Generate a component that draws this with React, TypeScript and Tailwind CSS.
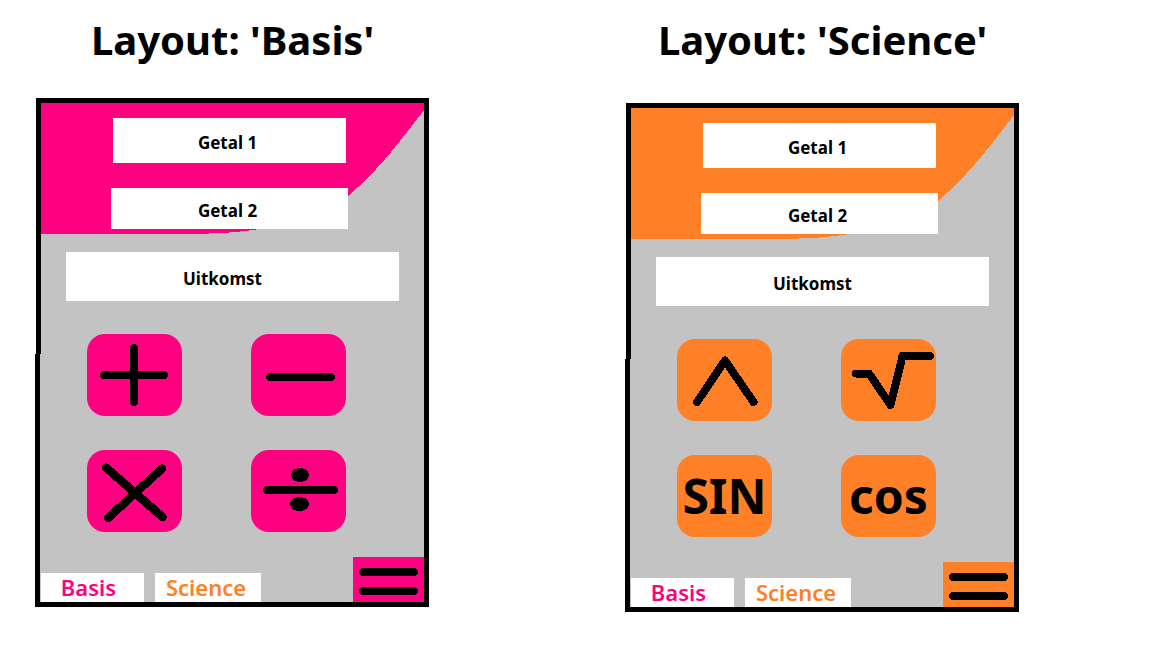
import React from 'react';

type Theme = 'basis' | 'science';

const fills: Record<Theme, string> = {
  basis: 'bg-[#ff0080]',
  science: 'bg-[#ff8027]',
};

const curves: Record<Theme, string> = {
  basis: 'fill-[#ff0080]',
  science: 'fill-[#ff8027]',
};

interface Operation {
  label: string;
  content: React.ReactNode;
}

function Strokes({ children }: { children: React.ReactNode }) {
  return (
    <svg
      viewBox="0 0 95 82"
      className="h-full w-full fill-none stroke-black stroke-[8]"
      strokeLinecap="round"
      strokeLinejoin="round"
      shapeRendering="crispEdges"
      aria-hidden="true"
    >
      {children}
    </svg>
  );
}

const operations: Record<Theme, Operation[]> = {
  basis: [
    { label: 'Plus', content: <Strokes><path d="M17 41H77M47 14V68" /></Strokes> },
    { label: 'Min', content: <Strokes><path d="M19 43H80" /></Strokes> },
    { label: 'Keer', content: <Strokes><path d="M19 17.5L75.5 67M75 18.5L21 68" strokeWidth="8.5" /></Strokes> },
    {
      label: 'Delen',
      content: (
        <Strokes>
          <path d="M16 40H83" />
          <ellipse cx="49" cy="25" rx="5" ry="3" />
          <ellipse cx="48.5" cy="54" rx="5.5" ry="3" />
        </Strokes>
      ),
    },
  ],
  science: [
    { label: 'Macht', content: <Strokes><path d="M20 63L48 21.5L76.5 63" /></Strokes> },
    { label: 'Wortel', content: <Strokes><path d="M15 34.5H28L49.5 66L61.5 17H89" /></Strokes> },
    { label: 'Sinus', content: 'SIN' },
    { label: 'Cosinus', content: 'cos' },
  ],
};

const fieldText =
  'bg-white text-center text-[17px] font-bold text-black outline-none placeholder:text-black placeholder:opacity-100';

function Calculator({ theme }: { theme: Theme }) {
  return (
    <div className="relative border-[5px] border-black bg-[#c3c3c3]">
      <svg
        viewBox="0 0 383 131"
        preserveAspectRatio="none"
        shapeRendering="crispEdges"
        className={`absolute left-0 top-0 h-[131px] w-full ${curves[theme]}`}
        aria-hidden="true"
      >
        <path d="M0 0H383V7C362 34 340 65 307 93C280 114 250 121 212 127C190 130 170 131 130 131H0Z" />
      </svg>
      <span className="absolute -left-[6px] -bottom-[5px] top-[251px] w-px bg-black" />
      <span className="absolute -left-px bottom-0 top-[251px] w-px bg-[#c3c3c3]" />

      <div className="relative flex flex-col">
        <div className="flex flex-col items-center gap-[25px] pr-[6px] pt-[15px]">
          <input aria-label="Getal 1" placeholder="Getal 1" className={`h-[45px] w-[233px] pr-1 pt-1 ${fieldText}`} />
          <input aria-label="Getal 2" placeholder="Getal 2" className={`h-[41px] w-[237px] pr-1 pt-1 ${fieldText}`} />
        </div>
        <div className="mt-[23px] px-[25px]">
          <input
            readOnly
            aria-label="Uitkomst"
            placeholder="Uitkomst"
            className={`h-[49px] w-full pr-5 pt-1 ${fieldText}`}
          />
        </div>
        <div className="mt-[33px] grid grid-cols-[95px_95px] gap-x-[69px] gap-y-[34px] pl-[46px]">
          {operations[theme].map((op) => (
            <button
              key={op.label}
              type="button"
              aria-label={op.label}
              className={`flex h-[82px] w-[95px] items-center justify-center rounded-[18px] text-5xl font-bold text-black ${fills[theme]}`}
            >
              {op.content}
            </button>
          ))}
        </div>
        <div className="mt-[25px] flex items-end">
          <button type="button" className="h-[29px] w-[103px] bg-white pr-2 text-[22px] leading-[29px] font-semibold text-[#ff0080]">
            Basis
          </button>
          <button type="button" className="ml-[11px] h-[29px] w-[106px] bg-white pr-1 text-[22px] leading-[29px] font-semibold text-[#ff8027]">
            Science
          </button>
          <button type="button" aria-label="Menu" className={`ml-auto h-[45px] w-[71px] ${fills[theme]}`}>
            <svg
              viewBox="0 0 71 45"
              className="h-full w-full stroke-black stroke-[8]"
              strokeLinecap="round"
              shapeRendering="crispEdges"
              aria-hidden="true"
            >
              <path d="M10 15H61M10 34H61" />
            </svg>
          </button>
        </div>
      </div>
    </div>
  );
}

export default function App() {
  return (
    <main className="flex min-h-screen flex-wrap items-start gap-x-[197px] bg-white pl-9 font-['Comic_Sans_MS','Noto_Sans',sans-serif] text-black">
      <section className="w-full max-w-[393px]">
        <h2 className="pb-[34px] pt-4 text-center text-[40px] leading-[48px] font-bold">Layout: 'Basis'</h2>
        <Calculator theme="basis" />
      </section>
      <section className="w-full max-w-[393px]">
        <h2 className="pb-[39px] pt-4 text-center text-[40px] leading-[48px] font-bold">Layout: 'Science'</h2>
        <Calculator theme="science" />
      </section>
    </main>
  );
}
